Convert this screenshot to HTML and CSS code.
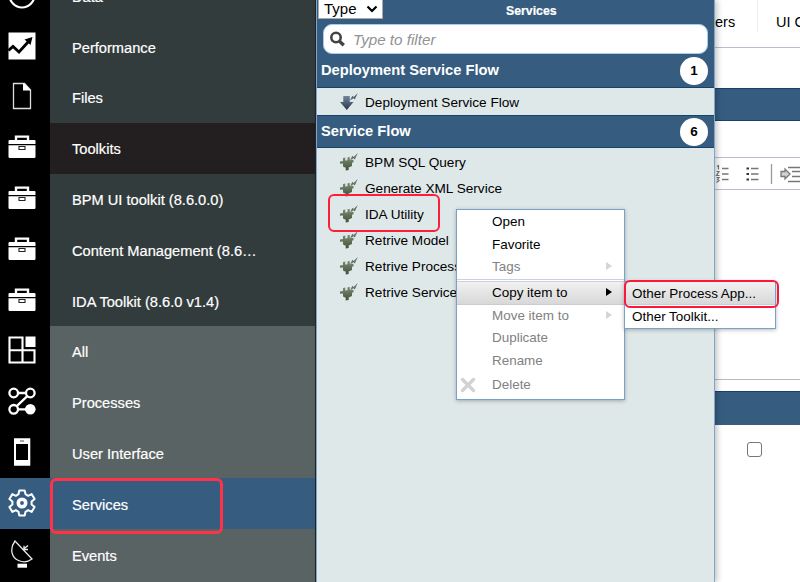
FILE: index.html
```html
<!DOCTYPE html>
<html lang="en">
<head>
<meta charset="utf-8">
<title>Services</title>
<link rel="stylesheet" href="styles.css">
</head>
<body>
<svg class="defs" width="0" height="0">
  <defs>
    <linearGradient id="plugfill" x1="0" y1="0" x2="0" y2="1"><stop offset="0" stop-color="#7b8d74"/><stop offset="1" stop-color="#3f5039"/></linearGradient>
    <linearGradient id="arrowfill" x1="0" y1="0" x2="0" y2="1"><stop offset="0" stop-color="#71859a"/><stop offset="1" stop-color="#28394e"/></linearGradient>
    <symbol id="toolkit" viewBox="0 0 28 24">
      <path d="M8 6V1.600h12V6" fill="none" stroke="#fff" stroke-width="2.400"/>
      <path d="M1.500 5h25q1 0 1 1v3H.5V6q0-1 1-1z" fill="#fff"/>
      <path d="M.5 10.300h27v11.500q0 1.200-1.200 1.200H1.700q-1.200 0-1.200-1.200z" fill="#fff"/>
      <path d="M11 11.500v3h6v-3z" fill="#fff" stroke="#222" stroke-width="1.100"/>
    </symbol>
    <symbol id="plug" viewBox="0 0 20 18">
      <path d="M1 8.500L4 8V5l2.300-.4v3l2.200-.3V4.300l2.300-.3v3.200l3.700-.4v2.400l-1.500.5v3.300l-3.300 1.500V17l-3 .6v-2.800L4 13.600v-3.100l-3 .2z" fill="url(#plugfill)"/>
      <path d="M11 7.500l2.300-4.800 1.400 1.400L18.800 0l-3 6.500-1.300-1.200z" fill="#65735f"/>
    </symbol>
  </defs>
</svg>
<div class="app">
  <nav class="nav">
    <div class="row"><span class="ico"><svg width="28" height="28" viewBox="0 0 28 28"><circle cx="14" cy="14" r="12.500" fill="none" stroke="#fff" stroke-width="2.200"/></svg></span><span class="lbl dark">Data</span></div>
    <div class="row"><span class="ico"><svg width="28" height="28" viewBox="0 0 28 28"><path d="M.5.5h27v27H.5z" fill="#fff"/><path d="M.5 18.500l4.500-4 6 5.500L21 9" fill="none" stroke="#000" stroke-width="2.800"/><path d="M16.500 7.500l8-2.500-2 8z"/></svg></span><span class="lbl dark">Performance</span></div>
    <div class="row"><span class="ico"><svg width="28" height="28" viewBox="0 0 28 28"><path d="M5.500 1.500h11l6 6.500v18.500h-17z" fill="none" stroke="#ddd" stroke-width="1.300"/><path d="M15 1.500h1.500l6.500 7h-8z" fill="#fff"/></svg></span><span class="lbl dark">Files</span></div>
    <div class="row"><span class="ico"><svg width="28" height="24"><use href="#toolkit"/></svg></span><span class="lbl head">Toolkits</span></div>
    <div class="row"><span class="ico"><svg width="28" height="24"><use href="#toolkit"/></svg></span><span class="lbl dark">BPM UI toolkit (8.6.0.0)</span></div>
    <div class="row"><span class="ico"><svg width="28" height="24"><use href="#toolkit"/></svg></span><span class="lbl dark">Content Management (8.6…</span></div>
    <div class="row"><span class="ico"><svg width="28" height="24"><use href="#toolkit"/></svg></span><span class="lbl dark">IDA Toolkit (8.6.0 v1.4)</span></div>
    <div class="row"><span class="ico"><svg width="28" height="28" viewBox="0 0 28 28"><path d="M1.500 1.500h13v25h-13zM1.500 14.300h25v12.200h-25z" fill="none" stroke="#fff" stroke-width="2.100"/><path d="M17.500.5h10V11h-10z" fill="#fff"/></svg></span><span class="lbl">All</span></div>
    <div class="row"><span class="ico"><svg width="28" height="28" viewBox="0 0 28 28"><g fill="none" stroke="#fff" stroke-width="2.300"><circle cx="5.700" cy="6" r="4.300"/><circle cx="22.300" cy="6" r="4.300"/><circle cx="5.700" cy="22.300" r="4.300"/><path d="M10 6h8M10 22.300h8M19.300 9.200L8.700 19.200"/></g><circle cx="22.300" cy="22.300" r="5.300" fill="#fff"/></svg></span><span class="lbl">Processes</span></div>
    <div class="row"><span class="ico"><svg width="28" height="28" viewBox="0 0 28 28"><path d="M6 .3h16.300v27.400H6zM8 6v16h12V6z" fill="#fff" fill-rule="evenodd"/><path d="M12 3h4" stroke="#555"/></svg></span><span class="lbl">User Interface</span></div>
    <div class="row on"><span class="ico"><svg width="28" height="28" viewBox="0 0 28 28"><path d="M11.300 1.500h5.400l.8 3.700 2.600 1.600 3.500-1.700 3 4.900-3 2.500v3l3 2.500-3 4.900-3.500-1.700-2.600 1.600-.8 3.700h-5.400l-.8-3.700-2.600-1.600-3.500 1.700-3-4.900 3-2.500v-3l-3-2.500 3-4.900 3.500 1.700 2.600-1.600z" fill="none" stroke="#fff" stroke-width="2" stroke-linejoin="round"/><circle cx="14" cy="14" r="3.700" fill="none" stroke="#fff" stroke-width="3.600"/></svg></span><span class="lbl"><span>Services</span><i class="mark mark-nav"></i></span></div>
    <div class="row last"><span class="ico"><svg width="28" height="28" viewBox="0 0 28 28"><path d="M7 1C1 9 4 18 10.500 20.500 15 22.500 20 22 24 19zM14.500 10L20 5.500M16 9.800V5.800M16 9.500h4" fill="none" stroke="#e8e8e8" stroke-width="1.300"/><path d="M9.500 23.700h9.500v4H9.500z" fill="#fff"/></svg></span><span class="lbl">Events</span></div>
  </nav>

  <section class="panel">
    <header class="top"><span class="type">Type<svg width="12" height="8" viewBox="0 0 12 8"><path d="M1.500 1.500L6 6l4.500-4.500" fill="none" stroke="#000" stroke-width="2.200"/></svg></span><b>Services</b></header>
    <div class="search"><svg width="17" height="17" viewBox="0 0 17 17" fill="none" stroke="#444"><circle cx="7" cy="6.500" r="4.700" stroke-width="2.600"/><path d="M10.500 10.200l4.300 4" stroke-width="3.400"/></svg><em>Type to filter</em></div>
    <h2 class="group"><span>Deployment Service Flow</span><i class="count">1</i></h2>
    <ul class="list first"><li><svg width="20" height="18" viewBox="0 0 20 18"><path d="M4.300 3h6.500v6h3.700L7.800 17 1 9h3.300z" fill="url(#arrowfill)"/><path d="M11 7.500l2.300-4.800 1.400 1.400L18.800 0l-3 6.500-1.300-1.200z" fill="#566478"/></svg><span>Deployment Service Flow</span></li></ul>
    <h2 class="group second"><span>Service Flow</span><i class="count">6</i></h2>
    <ul class="list">
      <li><svg width="20" height="18"><use href="#plug"/></svg><span>BPM SQL Query</span></li>
      <li><svg width="20" height="18"><use href="#plug"/></svg><span>Generate XML Service</span></li>
      <li><svg width="20" height="18"><use href="#plug"/></svg><span>IDA Utility</span><i class="mark mark-item"></i></li>
      <li><svg width="20" height="18"><use href="#plug"/></svg><span>Retrive Model</span></li>
      <li><svg width="20" height="18"><use href="#plug"/></svg><span>Retrive Process</span></li>
      <li><svg width="20" height="18"><use href="#plug"/></svg><span>Retrive Service</span></li>
    </ul>
  </section>

  <main class="main">
    <div class="tabs"><span class="tab">ers</span><span class="tab next">UI C</span></div>
    <div class="bar"></div>
    <div class="tools">
      <svg width="85" height="32" viewBox="0 0 85 32" fill="none" stroke="#777" stroke-width="1.300">
        <path d="M2 8.500l1.500-1v4M1.500 13.500h2.500l-2.500 4h3M1.500 19.500h2.500l-1.500 2 1.500 1-2.500 2" stroke-width="1.200"/>
        <path d="M7 10.500h6.500M7 16h6.500M7 21.500h6.500M36 10.500h7.500M36 16h7.500M36 21.500h7.500"/>
        <path d="M31.500 10.500H34M31.500 16H34M31.500 21.500H34" stroke="#333" stroke-width="2.200"/>
        <path d="M56.500 6v20" stroke="#999"/>
        <path d="M66 13.500h4V11l5 5-5 5v-2.500h-4z" fill="#ccd3c8"/>
        <path d="M73 9.500h12M77 13.500h8M77 18.500h8M73 23.500h12"/>
      </svg>
    </div>
    <div class="editor"></div>
    <div class="bar low"></div>
    <div class="check"></div>
  </main>
</div>

<div class="menu">
  <div class="mi">Open</div>
  <div class="mi">Favorite</div>
  <div class="mi off">Tags<i class="tri"></i></div>
  <div class="sep"></div>
  <div class="mi hot">Copy item to<i class="tri"></i></div>
  <div class="mi off">Move item to<i class="tri"></i></div>
  <div class="mi off">Duplicate</div>
  <div class="mi off">Rename</div>
  <div class="mi off del"><svg width="16" height="16" viewBox="0 0 16 16"><path d="M2.500 2.500l11 11M13.500 2.500l-11 11" stroke="#d2d2d2" stroke-width="3.400" stroke-linecap="round"/></svg>Delete</div>
</div>
<div class="submenu">
  <div class="mi hot">Other Process App...</div>
  <div class="mi">Other Toolkit...</div>
  <i class="mark mark-sub"></i>
</div>
</body>
</html>
```
FILE: styles.css
```css
* { box-sizing: border-box; }
body { margin: 0; width: 800px; height: 582px; overflow: hidden; position: relative; background: #fff; font-family: "Liberation Sans", Arial, sans-serif; color: #000; }
.defs { position: absolute; }
.app { display: flex; height: 582px; overflow: hidden; }
i { font-style: normal; }

.nav { width: 316px; flex: none; margin-top: -29.6px; background: #000; border-right: 1px solid #20282b; height: 640px; }
.row { display: flex; height: 50.8px; }
.row.last .lbl { height: 56px; }
.ico { width: 50px; flex: none; background: #000; display: flex; align-items: center; padding: 0 0 2px 8px; }
.lbl { flex: 1; position: relative; background: #5a6363; color: #fff; font-size: 14.65px; line-height: 50.8px; padding: 1.4px 0 0 22px; white-space: nowrap; -webkit-text-stroke: .2px #fff; }
.lbl.dark { background: #333c3d; }
.lbl.head { background: #231f20; }
.row.on .ico, .row.on .lbl { background: #365d80; }

.mark { position: absolute; border: 3px solid #ff3347; border-radius: 6px; z-index: 5; }
.mark-nav { left: 0; top: 0; width: 173px; height: 56px; border-width: 3.5px; }
.mark-item { left: 11px; top: -7px; width: 112px; height: 38px; border-width: 2px; border-color: #fb1f39; }
.mark-sub { left: -1px; top: -2px; width: 155px; height: 28px; border-width: 2.5px; border-color: #fb1838; }

.panel { width: 399px; flex: none; background: #dfe8e9; border-left: 1px solid #7fa5cd; border-right: 1px solid #7fa5cd; box-shadow: 2px 0 6px rgba(0,0,0,.25); position: relative; z-index: 1; }
.top { height: 24px; background: #365d80; display: flex; padding-left: 1px; }
.type { width: 65px; height: 19px; background: #fff; border: 1px solid #aaa; border-top: 0; font-size: 15px; line-height: 18px; padding: 0 4px 0 5px; display: flex; justify-content: space-between; align-items: center; }
.top b { color: #fff; font-size: 12.3px; line-height: 23px; margin-left: 123px; -webkit-text-stroke: .2px #fff; }
.search { height: 30px; background: #fff; border: 1px solid #a4cdf1; border-radius: 9px; margin: 0 6px; display: flex; align-items: center; gap: 7px; padding: 1px 0 0 5px; color: #929292; font-size: 15.2px; box-shadow: 0 0 0 10px #365d80; clip-path: inset(0 -6px); }
.group { margin: 0; height: 34px; background: #365d80; border-top: 1px solid #174269; border-bottom: 1px solid #174269; color: #fff; font-size: 14.7px; line-height: 31px; display: flex; justify-content: space-between; padding: 0 6px 0 4px; }
.search + .group { border-top: 0; line-height: 33px; }
.second { height: 33px; }
.count { width: 28px; height: 28px; margin-top: 2px; border-radius: 50%; background: #fff; color: #000; text-align: center; line-height: 28px; font-size: 13.5px; }
.search + .group .count { margin-top: 3px; }
.list { margin: 0; padding: 1px 0 0; list-style: none; }
.list.first { height: 27px; }
.list li { height: 26px; display: flex; align-items: center; gap: 6px; padding-left: 22px; font-size: 13.6px; position: relative; white-space: nowrap; }

.main { flex: 1; min-width: 0; background: #fff; overflow: hidden; }
.tabs { height: 48px; border-bottom: 1px solid #b7bfd0; display: flex; font-size: 14.5px; line-height: 45px; }
.tab { width: 43px; height: 32px; flex: none; border-right: 1px solid #eee; }
.tab.next { width: auto; border: 0; padding-left: 18px; white-space: nowrap; }
.bar { margin-top: 40px; height: 33px; background: #365d80; border-top: 1px solid #174269; border-bottom: 1px solid #174269; }
.tools { margin-top: 36px; height: 33px; border-top: 1px solid #b7bfd0; border-bottom: 1px solid #b7bfd0; }
.editor { height: 190px; border-bottom: 1px solid #b7bbc4; }
.bar.low { margin-top: 11px; height: 34px; border-bottom: 0; }
.check { width: 15px; height: 15px; margin: 17px 0 0 32px; border: 1px solid #767676; border-radius: 3px; }

.menu, .submenu { position: absolute; background: #fff; border: 1px solid #7aa2c9; box-shadow: 0 1px 4px rgba(0,0,0,.28); font-size: 13.45px; }
.menu { left: 456px; top: 209px; width: 169px; height: 191px; padding-top: 1px; z-index: 3; }
.submenu { left: 624px; top: 281px; width: 152px; height: 48px; z-index: 4; }
.mi { height: 22.7px; line-height: 22px; padding-left: 35px; display: flex; position: relative; white-space: nowrap; }
.mi.off { color: #818181; }
.mi.hot { background: linear-gradient(#f1f1f1, #d8d8d8); border-bottom: 1px solid #ccc; }
.sep { height: 3px; border-top: 1px solid #ccd0db; border-bottom: 1px solid #ccd0db; }
.tri { position: absolute; left: 149px; top: 6px; border: 4px solid transparent; border-left: 6px solid #000; border-right: 0; }
.off .tri { border-left-color: #d5d5d5; }
.submenu .mi { padding-left: 7px; height: 23px; line-height: 24px; }
.mi.del { padding-left: 3px; gap: 16px; margin-top: 1px; align-items: center; }
```
